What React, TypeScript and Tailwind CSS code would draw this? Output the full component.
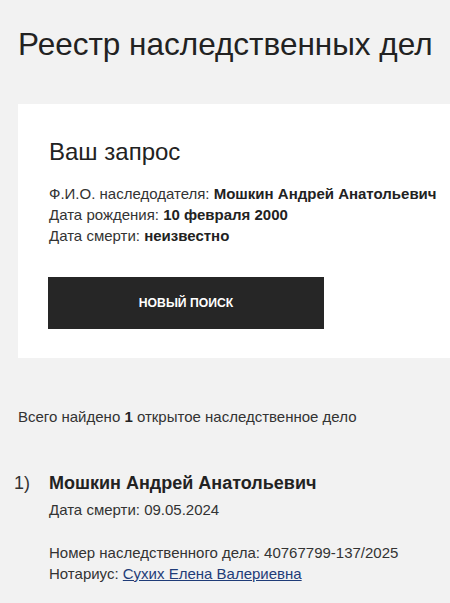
export default function App() {
  return (
    <main className="min-h-screen w-[450px] overflow-hidden bg-[#f2f2f2] font-['Liberation_Sans',Arial,sans-serif] text-[#222]">
      <h1 className="pl-[18px] pt-[25px] text-[31.5px] leading-[38px] text-[#222]">Реестр наследственных дел</h1>

      <section className="ml-[18px] mt-[41px] w-[432px] bg-white pb-[29px] pl-[31px] pt-[33px]">
        <h2 className="text-[24px] leading-[30px] text-[#222]">Ваш запрос</h2>
        <div className="mt-[16px] text-[15px] leading-[21px] text-[#333]">
          <p>
            Ф.И.О. наследодателя: <b className="text-[#222]">Мошкин Андрей Анатольевич</b>
          </p>
          <p>
            Дата рождения: <b className="text-[#222]">10 февраля 2000</b>
          </p>
          <p>
            Дата смерти: <b className="text-[#222]">неизвестно</b>
          </p>
        </div>
        <button className="mt-[31px] h-[52px] w-[276px] -translate-x-px bg-[#262626] text-[12.2px] font-bold uppercase text-white">
          Новый поиск
        </button>
      </section>

      <p className="mt-[49px] pl-[18px] text-[15px] leading-[20px] text-[#333]">
        Всего найдено <b className="text-[#222]">1</b> открытое наследственное дело
      </p>

      <div className="mt-[43px] flex">
        <span className="w-[49px] pl-[14px] text-[18px] leading-[26px] text-[#333]">1)</span>
        <div>
          <p className="text-[18px] font-bold leading-[26px] text-[#222]">Мошкин Андрей Анатольевич</p>
          <p className="mt-[3px] text-[15px] leading-[21px] text-[#333]">Дата смерти: 09.05.2024</p>
          <p className="mt-[22px] text-[15px] leading-[21px] text-[#333]">Номер наследственного дела: 40767799-137/2025</p>
          <p className="text-[15px] leading-[21px] text-[#333]">
            Нотариус: <a href="#" className="text-[#1f3c78] underline">Сухих Елена Валериевна</a>
          </p>
        </div>
      </div>
    </main>
  );
}
